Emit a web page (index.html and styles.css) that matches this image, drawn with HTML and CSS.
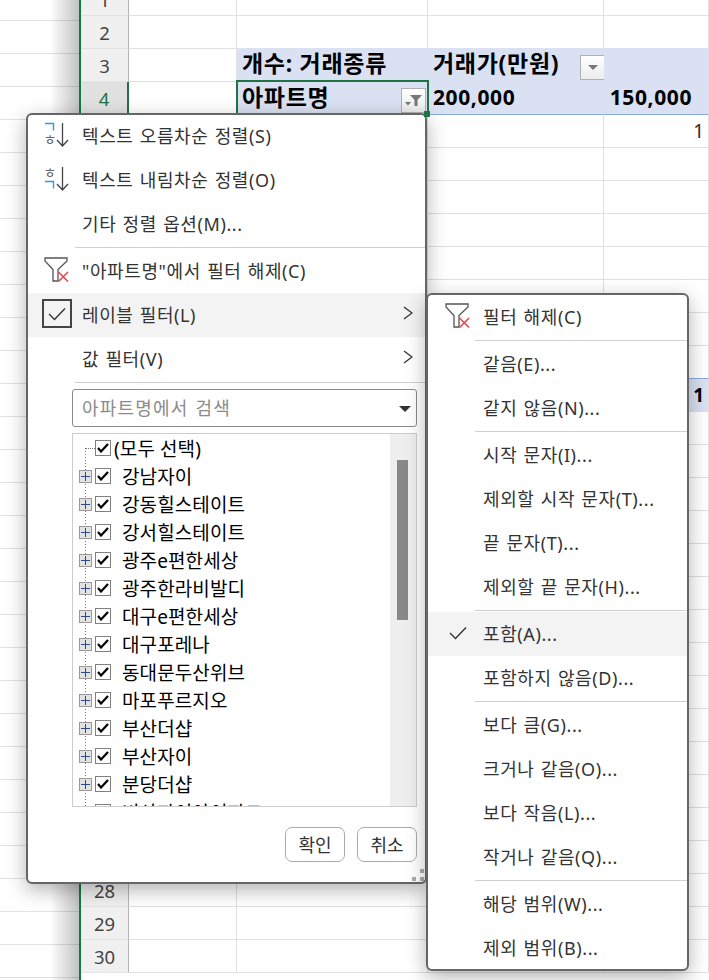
FILE: index.html
```html
<!DOCTYPE html>
<html lang="ko">
<head>
    <meta charset="UTF-8">
    <meta name="viewport" content="width=device-width, initial-scale=1.0">
    <title>레이블 필터</title>
    <link rel="stylesheet" href="styles.css">
</head>
<body>

    <!-- shared icons -->
    <svg class="defs" width="0" height="0">
        <symbol id="clearFilter" viewBox="0 0 26 26">
            <path d="M1 1h22v3L14 12.500V24H9V12.500L1 4z" fill="none" stroke="#555" stroke-width="1.300"/>
            <path d="M14.500 15l9.500 9.500M24 15l-9.500 9.500" fill="none" stroke="#e8414a" stroke-width="1.500"/>
        </symbol>
        <symbol id="chevron" viewBox="0 0 10 14">
            <path d="M1 1l8 6-8 6" fill="none" stroke="#333" stroke-width="1.300"/>
        </symbol>
        <symbol id="tick" viewBox="0 0 18 14">
            <path d="M1 7l5.500 5.500L17 1.500" fill="none" stroke="#333" stroke-width="1.400"/>
        </symbol>
        <symbol id="boxTick" viewBox="0 0 12 10">
            <path d="M1 5l3 3.500L11 1" fill="none" stroke="#000" stroke-width="2.200"/>
        </symbol>
    </svg>

    <!-- other window behind the sheet -->
    <div class="back-sheet"></div>

    <!-- Spreadsheet -->
    <div class="sheet">
        <div class="row"><div class="num">1</div><div class="cell"></div><div class="cell"></div><div class="cell"></div><div class="cell"></div></div>
        <div class="row"><div class="num">2</div><div class="cell"></div><div class="cell"></div><div class="cell"></div><div class="cell"></div></div>
        <div class="row row-band row-band-start">
            <div class="num">3</div><div class="cell"></div>
            <div class="cell pivot">개수: 거래종류</div>
            <div class="cell pivot">거래가(만원)<span class="drop-btn"><span class="drop-arrow"></span></span></div>
            <div class="cell"></div>
        </div>
        <div class="row row-band row-band-end">
            <div class="num num-active">4</div><div class="cell"></div>
            <div class="cell pivot active-cell">아파트명
                <span class="drop-btn filter-btn">
                    <svg width="18" height="14" viewBox="0 0 18 14"><path d="M5 1h12L12.500 6v6H9.500V6z" fill="#777"/><path d="M0 8h6l-3 3.500z" fill="#777"/></svg>
                </span>
            </div>
            <div class="cell pivot pivot-num">200,000</div>
            <div class="cell pivot pivot-num pivot-right">150,000</div>
        </div>
        <div class="row"><div class="num">5</div><div class="cell"></div><div class="cell"></div><div class="cell"></div><div class="cell count">1</div></div>
        <div class="row"><div class="num">6</div><div class="cell"></div><div class="cell"></div><div class="cell"></div><div class="cell"></div></div>
        <div class="row"><div class="num">7</div><div class="cell"></div><div class="cell"></div><div class="cell"></div><div class="cell"></div></div>
        <div class="row"><div class="num">8</div><div class="cell"></div><div class="cell"></div><div class="cell"></div><div class="cell"></div></div>
        <div class="row"><div class="num">9</div><div class="cell"></div><div class="cell"></div><div class="cell"></div><div class="cell"></div></div>
        <div class="row"><div class="num">10</div><div class="cell"></div><div class="cell"></div><div class="cell"></div><div class="cell"></div></div>
        <div class="row"><div class="num">11</div><div class="cell"></div><div class="cell"></div><div class="cell"></div><div class="cell"></div></div>
        <div class="row"><div class="num">12</div><div class="cell"></div><div class="cell"></div><div class="cell"></div><div class="cell"></div></div>
        <div class="row row-total"><div class="num">13</div><div class="cell"></div><div class="cell"></div><div class="cell"></div><div class="cell count count-total">1</div></div>
        <div class="row"><div class="num">14</div><div class="cell"></div><div class="cell"></div><div class="cell"></div><div class="cell"></div></div>
        <div class="row"><div class="num">15</div><div class="cell"></div><div class="cell"></div><div class="cell"></div><div class="cell"></div></div>
        <div class="row"><div class="num">16</div><div class="cell"></div><div class="cell"></div><div class="cell"></div><div class="cell"></div></div>
        <div class="row"><div class="num">17</div><div class="cell"></div><div class="cell"></div><div class="cell"></div><div class="cell"></div></div>
        <div class="row"><div class="num">18</div><div class="cell"></div><div class="cell"></div><div class="cell"></div><div class="cell"></div></div>
        <div class="row"><div class="num">19</div><div class="cell"></div><div class="cell"></div><div class="cell"></div><div class="cell"></div></div>
        <div class="row"><div class="num">20</div><div class="cell"></div><div class="cell"></div><div class="cell"></div><div class="cell"></div></div>
        <div class="row"><div class="num">21</div><div class="cell"></div><div class="cell"></div><div class="cell"></div><div class="cell"></div></div>
        <div class="row"><div class="num">22</div><div class="cell"></div><div class="cell"></div><div class="cell"></div><div class="cell"></div></div>
        <div class="row"><div class="num">23</div><div class="cell"></div><div class="cell"></div><div class="cell"></div><div class="cell"></div></div>
        <div class="row"><div class="num">24</div><div class="cell"></div><div class="cell"></div><div class="cell"></div><div class="cell"></div></div>
        <div class="row"><div class="num">25</div><div class="cell"></div><div class="cell"></div><div class="cell"></div><div class="cell"></div></div>
        <div class="row"><div class="num">26</div><div class="cell"></div><div class="cell"></div><div class="cell"></div><div class="cell"></div></div>
        <div class="row"><div class="num">27</div><div class="cell"></div><div class="cell"></div><div class="cell"></div><div class="cell"></div></div>
        <div class="row"><div class="num">28</div><div class="cell"></div><div class="cell"></div><div class="cell"></div><div class="cell"></div></div>
        <div class="row"><div class="num">29</div><div class="cell"></div><div class="cell"></div><div class="cell"></div><div class="cell"></div></div>
        <div class="row"><div class="num">30</div><div class="cell"></div><div class="cell"></div><div class="cell"></div><div class="cell"></div></div>
    </div>

    <!-- Filter menu -->
    <div class="menu filter-menu">
        <div class="item">
            <span class="item-icon">
                <svg width="26" height="26" viewBox="0 0 26 26">
                    <path d="M1 1.500h8.500v7" fill="none" stroke="#2e9bea" stroke-width="1.400"/>
                    <text x="-0.500" y="23" class="jamo">ㅎ</text>
                    <path d="M18.500 1v23M13 18l5.500 6 5.500-6" fill="none" stroke="#444" stroke-width="1.300"/>
                </svg>
            </span>
            <span class="item-text">텍스트 오름차순 정렬(S)</span>
        </div>
        <div class="item">
            <span class="item-icon">
                <svg width="26" height="26" viewBox="0 0 26 26">
                    <text x="-0.500" y="12" class="jamo">ㅎ</text>
                    <path d="M1 15.500h8.500v7" fill="none" stroke="#2e9bea" stroke-width="1.400"/>
                    <path d="M18.500 1v23M13 18l5.500 6 5.500-6" fill="none" stroke="#444" stroke-width="1.300"/>
                </svg>
            </span>
            <span class="item-text">텍스트 내림차순 정렬(O)</span>
        </div>
        <div class="item"><span class="item-icon"></span><span class="item-text">기타 정렬 옵션(M)...</span></div>
        <div class="sep"></div>
        <div class="item">
            <span class="item-icon"><svg class="funnel" width="26" height="26"><use href="#clearFilter"/></svg></span>
            <span class="item-text">"아파트명"에서 필터 해제(C)</span>
        </div>
        <div class="item item-hover">
            <span class="item-icon"><span class="check-frame"><svg width="18" height="14"><use href="#tick"/></svg></span></span>
            <span class="item-text">레이블 필터(L)</span>
            <svg class="chevron" width="10" height="14"><use href="#chevron"/></svg>
        </div>
        <div class="item">
            <span class="item-icon"></span>
            <span class="item-text">값 필터(V)</span>
            <svg class="chevron" width="10" height="14"><use href="#chevron"/></svg>
        </div>
        <div class="sep"></div>

        <div class="search">
            <span>아파트명에서 검색</span>
            <span class="search-arrow"></span>
        </div>

        <div class="list">
            <div class="tree">
                <div class="tree-row tree-all"><span class="box"><svg width="12" height="10"><use href="#boxTick"/></svg></span><span class="all-label">(모두 선택)</span></div>
                <div class="tree-row"><span class="plus"></span><span class="box"><svg width="12" height="10"><use href="#boxTick"/></svg></span><span class="tree-label">강남자이</span></div>
                <div class="tree-row"><span class="plus"></span><span class="box"><svg width="12" height="10"><use href="#boxTick"/></svg></span><span class="tree-label">강동힐스테이트</span></div>
                <div class="tree-row"><span class="plus"></span><span class="box"><svg width="12" height="10"><use href="#boxTick"/></svg></span><span class="tree-label">강서힐스테이트</span></div>
                <div class="tree-row"><span class="plus"></span><span class="box"><svg width="12" height="10"><use href="#boxTick"/></svg></span><span class="tree-label">광주e편한세상</span></div>
                <div class="tree-row"><span class="plus"></span><span class="box"><svg width="12" height="10"><use href="#boxTick"/></svg></span><span class="tree-label">광주한라비발디</span></div>
                <div class="tree-row"><span class="plus"></span><span class="box"><svg width="12" height="10"><use href="#boxTick"/></svg></span><span class="tree-label">대구e편한세상</span></div>
                <div class="tree-row"><span class="plus"></span><span class="box"><svg width="12" height="10"><use href="#boxTick"/></svg></span><span class="tree-label">대구포레나</span></div>
                <div class="tree-row"><span class="plus"></span><span class="box"><svg width="12" height="10"><use href="#boxTick"/></svg></span><span class="tree-label">동대문두산위브</span></div>
                <div class="tree-row"><span class="plus"></span><span class="box"><svg width="12" height="10"><use href="#boxTick"/></svg></span><span class="tree-label">마포푸르지오</span></div>
                <div class="tree-row"><span class="plus"></span><span class="box"><svg width="12" height="10"><use href="#boxTick"/></svg></span><span class="tree-label">부산더샵</span></div>
                <div class="tree-row"><span class="plus"></span><span class="box"><svg width="12" height="10"><use href="#boxTick"/></svg></span><span class="tree-label">부산자이</span></div>
                <div class="tree-row"><span class="plus"></span><span class="box"><svg width="12" height="10"><use href="#boxTick"/></svg></span><span class="tree-label">분당더샵</span></div>
                <div class="tree-row"><span class="plus"></span><span class="box"></span><span class="tree-label">비산자이아이파크</span></div>
            </div>
            <div class="scroll-track"><div class="scroll-thumb"></div></div>
        </div>

        <div class="buttons">
            <button class="btn">확인</button>
            <button class="btn">취소</button>
        </div>
        <div class="grip"><span></span><span></span><span></span></div>
    </div>

    <!-- Label filter submenu -->
    <div class="menu sub-menu">
        <div class="item">
            <span class="item-icon"><svg class="funnel" width="26" height="26"><use href="#clearFilter"/></svg></span>
            <span class="item-text">필터 해제(C)</span>
        </div>
        <div class="sep"></div>
        <div class="item"><span class="item-icon"></span><span class="item-text">같음(E)...</span></div>
        <div class="item"><span class="item-icon"></span><span class="item-text">같지 않음(N)...</span></div>
        <div class="sep"></div>
        <div class="item"><span class="item-icon"></span><span class="item-text">시작 문자(I)...</span></div>
        <div class="item"><span class="item-icon"></span><span class="item-text">제외할 시작 문자(T)...</span></div>
        <div class="item"><span class="item-icon"></span><span class="item-text">끝 문자(T)...</span></div>
        <div class="item"><span class="item-icon"></span><span class="item-text">제외할 끝 문자(H)...</span></div>
        <div class="sep"></div>
        <div class="item item-hover">
            <span class="item-icon"><svg width="18" height="14"><use href="#tick"/></svg></span>
            <span class="item-text">포함(A)...</span>
        </div>
        <div class="item"><span class="item-icon"></span><span class="item-text">포함하지 않음(D)...</span></div>
        <div class="sep"></div>
        <div class="item"><span class="item-icon"></span><span class="item-text">보다 큼(G)...</span></div>
        <div class="item"><span class="item-icon"></span><span class="item-text">크거나 같음(O)...</span></div>
        <div class="item"><span class="item-icon"></span><span class="item-text">보다 작음(L)...</span></div>
        <div class="item"><span class="item-icon"></span><span class="item-text">작거나 같음(Q)...</span></div>
        <div class="sep"></div>
        <div class="item"><span class="item-icon"></span><span class="item-text">해당 범위(W)...</span></div>
        <div class="item"><span class="item-icon"></span><span class="item-text">제외 범위(B)...</span></div>
    </div>

    <!-- Fill handle of the active cell, sits over the menu corner -->
    <div class="fill-handle"></div>

</body>
</html>
```

FILE: styles.css
```css
/* General body styles */
body {
    font-family: "Noto Sans", "Noto Sans CJK KR", sans-serif;
    margin: 0;
    height: 980px;
    overflow: hidden;
    display: flex;
    position: relative;
    background: #fff;
    color: #333;
}

.defs {
    position: absolute;
}

/* Window behind the sheet */
.back-sheet {
    width: 79px;
    flex: none;
    border-right: 2px solid #107c41;
    background:
        linear-gradient(to right, rgba(0, 0, 0, 0) 50px, rgba(0, 0, 0, 0.24) 79px),
        linear-gradient(to bottom, transparent 20px, #e2e2e2 20px, #e2e2e2 21px, transparent 21px) 0 0 / 100% 33px;
}

/* Spreadsheet */
.sheet {
    flex: 1;
    margin-top: -17px;
}

.row {
    display: grid;
    grid-template-columns: 48px 108px 191px 176px 1fr;
    grid-template-rows: 33px;
    height: 33px;
}

.num {
    background: #f0f0f0;
    border-right: 1px solid #b4b4b4;
    border-bottom: 1px solid #e2e2e2;
    font-size: 18.500px;
    line-height: 33px;
    text-align: center;
    color: #444;
}

.num-active {
    background: #e1e1e1;
    border-right: 2px solid #217346;
    color: #217346;
}

.cell {
    box-sizing: border-box;
    min-width: 0;
    border-right: 1px solid #e0e0e0;
    border-bottom: 1px solid #e0e0e0;
}

.row-band .cell:nth-child(n+3) {
    background: #d9e1f2;
    border-color: #d9e1f2;
}

.row-band-start .cell:nth-child(n+3) {
    box-shadow: 0 -1px 0 #d9e1f2;
}

.row-band-end .cell:nth-child(n+3) {
    border-bottom-color: #8ea9db;
}

.row-total .cell:last-child {
    background: #d9e1f2;
    border-top: 1px solid #8ea9db;
    border-bottom-color: #d9e1f2;
    margin-top: -1px;
}

.pivot {
    display: flex;
    align-items: center;
    font-size: 23px;
    line-height: 26px;
    font-weight: 700;
    color: #000;
    padding: 0 0 4px 5px;
    letter-spacing: 0.7px;
    white-space: nowrap;
}

.pivot-num {
    font-size: 21px;
    letter-spacing: 0.6px;
    padding-bottom: 2px;
}

.pivot-right {
    justify-content: flex-end;
    padding-right: 16px;
}

.active-cell {
    outline: 2px solid #217346;
    outline-offset: -1px;
    position: relative;
    margin-top: -1px;
    padding-bottom: 2px;
}

/* Pivot dropdown buttons */
.drop-btn {
    width: 25px;
    height: 25px;
    flex: none;
    box-sizing: border-box;
    border: 1px solid #b0b0b0;
    background: linear-gradient(#fff, #ececec);
    display: flex;
    align-items: center;
    justify-content: center;
    align-self: flex-end;
    margin: 0 0 -3px 21px;
}

.drop-arrow {
    border: 5px solid transparent;
    border-top: 5px solid #777;
    border-bottom: 0;
}

.filter-btn {
    margin: 0 1px -1px auto;
}

.count {
    text-align: right;
    padding-right: 4px;
    font-size: 19px;
    line-height: 33px;
    color: #3c2424;
}

.count-total {
    font-weight: 700;
    color: #000;
}

.fill-handle {
    position: absolute;
    left: 424px;
    top: 111px;
    width: 6px;
    height: 6px;
    background: #217346;
}

/* Menus */
.menu {
    position: absolute;
    box-sizing: border-box;
    background: #fff;
    border: 2px solid #666;
    border-radius: 6px;
    box-shadow: 0 6px 20px rgba(0, 0, 0, 0.3);
    font-size: 18px;
    letter-spacing: 0.6px;
    word-spacing: 1px;
}

.filter-menu {
    left: 26px;
    top: 113px;
    width: 401px;
    height: 771px;
}

.filter-menu .item:first-child {
    margin-top: -1px;
}

.sub-menu {
    left: 426px;
    top: 293px;
    width: 263px;
    height: 678px;
}

.item {
    height: 44px;
    display: flex;
    align-items: center;
}

.item-hover {
    background: #f3f3f3;
}

.item-icon {
    flex: none;
    width: 54px;
    display: flex;
    justify-content: center;
    align-items: center;
    padding-left: 4px;
    box-sizing: border-box;
    margin-bottom: 3px;
}

.sub-menu .item-icon {
    width: 55px;
}

.item-text {
    flex: 1;
    white-space: nowrap;
    margin-bottom: 3px;
}

.chevron {
    margin: 0 12px 4px 0;
}

.sep {
    height: 1px;
    background: #cfcfcf;
    margin: 1px 0 1px 47px;
}

.check-frame {
    width: 30px;
    height: 29px;
    box-sizing: border-box;
    border: 2px solid #444;
    display: flex;
    align-items: center;
    justify-content: center;
}

.jamo {
    font-size: 14px;
    fill: #666;
    letter-spacing: 0;
}

/* Search box */
.search {
    margin: 6px 8px 6px 44px;
    height: 38px;
    box-sizing: border-box;
    border: 1px solid #8a8a8a;
    border-radius: 3px;
    display: flex;
    align-items: center;
    justify-content: space-between;
    padding: 0 5px 2px 9px;
    color: #8a8a8a;
    letter-spacing: 1.200px;
}

.search-arrow {
    border: 6px solid transparent;
    border-top: 6px solid #333;
    border-bottom: 0;
    margin-top: 3px;
}

/* Checkbox list */
.list {
    margin: 0 8px 0 44px;
    height: 374px;
    box-sizing: border-box;
    border: 1px solid #ccc;
    display: flex;
    overflow: hidden;
}

.tree {
    flex: 1;
    color: #000;
    font-size: 19px;
    letter-spacing: 0.1px;
    word-spacing: 0;
    background: repeating-linear-gradient(#777 0 1px, transparent 1px 3px) 12px 14px / 1px 100% no-repeat;
}

.tree-row {
    height: 28px;
    display: flex;
    align-items: center;
    padding-left: 6px;
    white-space: nowrap;
}

.tree-all {
    padding-left: 22px;
    position: relative;
}

.tree-all::before {
    content: "";
    position: absolute;
    left: 12px;
    top: 14px;
    width: 10px;
    border-top: 1px dotted #777;
}

.plus {
    width: 13px;
    height: 13px;
    box-sizing: border-box;
    border: 1px solid #999;
    background:
        linear-gradient(#2a4a8a, #2a4a8a) center / 9px 1px no-repeat,
        linear-gradient(#2a4a8a, #2a4a8a) center / 1px 9px no-repeat,
        #e2e2e2;
    margin-right: 3px;
}

.box {
    width: 16px;
    height: 16px;
    flex: none;
    box-sizing: border-box;
    border: 1px solid #808080;
    background: #fff;
    display: flex;
    align-items: center;
    justify-content: center;
}

.tree-label {
    margin-left: 11px;
}

.all-label {
    margin-left: 3px;
}

.scroll-track {
    width: 26px;
    flex: none;
    background: #eee;
}

.scroll-thumb {
    width: 11px;
    height: 160px;
    margin: 26px 0 0 7px;
    background: #888;
}

/* Buttons */
.buttons {
    display: flex;
    justify-content: flex-end;
    gap: 12px;
    margin: 20px 8px 0 0;
}

.btn {
    width: 60px;
    height: 35px;
    box-sizing: border-box;
    border: 1px solid #aaa;
    border-radius: 7px;
    background: #fff;
    color: #333;
    font-family: inherit;
    font-size: 18px;
    padding: 0 0 2px;
}

/* Resize grip */
.grip {
    position: absolute;
    right: 1px;
    bottom: 1px;
    width: 12px;
    height: 12px;
    display: grid;
    grid-template-columns: 4px 4px;
    grid-template-rows: 4px 4px;
    gap: 4px;
}

.grip span {
    background: #aaa;
}

.grip span:first-child {
    grid-column: 2;
}
```
